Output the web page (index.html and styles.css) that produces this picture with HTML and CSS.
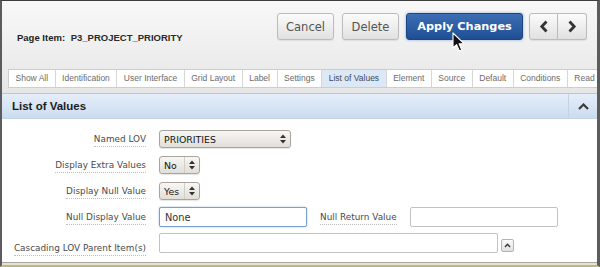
FILE: index.html
```html
<!DOCTYPE html>
<html lang="en">

<head>
    <meta charset="UTF-8">
    <meta name="viewport" content="width=device-width, initial-scale=1.0">
    <title>Page Item: P3_PROJECT_PRIORITY</title>
    <link rel="stylesheet" href="styles.css">
</head>

<body>

    <div class="screen">
        <div class="window">

            <div class="topbar">
                <div class="toolbar">
                    <div class="page-item"><strong>Page Item:</strong> <span>P3_PROJECT_PRIORITY</span></div>
                    <div class="actions">
                        <button class="btn btn-cancel">Cancel</button>
                        <button class="btn btn-delete">Delete</button>
                        <button class="btn btn-apply">Apply Changes</button>
                        <div class="nav-group">
                            <button class="btn btn-nav">
                                <svg width="10" height="13" viewBox="0 0 10 13"><polyline points="7.5,1.5 2.8,6.5 7.5,11.5" fill="none" stroke="#333" stroke-width="2.8"/></svg>
                            </button>
                            <button class="btn btn-nav">
                                <svg width="10" height="13" viewBox="0 0 10 13"><polyline points="2.5,1.5 7.2,6.5 2.5,11.5" fill="none" stroke="#333" stroke-width="2.8"/></svg>
                            </button>
                        </div>
                    </div>
                </div>

                <ul class="tabs">
                    <li>Show All</li>
                    <li>Identification</li>
                    <li>User Interface</li>
                    <li>Grid Layout</li>
                    <li>Label</li>
                    <li>Settings</li>
                    <li class="active">List of Values</li>
                    <li>Element</li>
                    <li>Source</li>
                    <li>Default</li>
                    <li>Conditions</li>
                    <li class="last">Read</li>
                </ul>
            </div>

            <div class="region-head">
                <h2>List of Values</h2>
                <div class="collapse">
                    <svg width="11" height="7" viewBox="0 0 11 7"><polyline points="1,6 5.5,1.5 10,6" fill="none" stroke="#3a3a3a" stroke-width="2.2"/></svg>
                </div>
            </div>

            <div class="region-body">
                <div class="row">
                    <div class="label"><span>Named LOV</span></div>
                    <div class="select select-wide">
                        <span class="select-text">PRIORITIES</span>
                        <span class="select-arrows">
                            <svg width="6" height="10" viewBox="0 0 6 10"><polygon points="0,4 3,0.5 6,4" fill="#333"/><polygon points="0,6 3,9.5 6,6" fill="#333"/></svg>
                        </span>
                    </div>
                </div>
                <div class="row">
                    <div class="label"><span>Display Extra Values</span></div>
                    <div class="select select-small">
                        <span class="select-text">No</span>
                        <span class="select-arrows split">
                            <svg width="6" height="10" viewBox="0 0 6 10"><polygon points="0,4 3,0.5 6,4" fill="#333"/><polygon points="0,6 3,9.5 6,6" fill="#333"/></svg>
                        </span>
                    </div>
                </div>
                <div class="row">
                    <div class="label"><span>Display Null Value</span></div>
                    <div class="select select-small">
                        <span class="select-text">Yes</span>
                        <span class="select-arrows split">
                            <svg width="6" height="10" viewBox="0 0 6 10"><polygon points="0,4 3,0.5 6,4" fill="#333"/><polygon points="0,6 3,9.5 6,6" fill="#333"/></svg>
                        </span>
                    </div>
                </div>
                <div class="row">
                    <div class="label"><span>Null Display Value</span></div>
                    <input class="field field-focus" type="text" value="None">
                    <div class="label label-inline"><span>Null Return Value</span></div>
                    <input class="field" type="text" value="">
                </div>
                <div class="row row-last">
                    <div class="label"><span>Cascading LOV Parent Item(s)</span></div>
                    <input class="field field-long" type="text" value="">
                    <button class="mini-btn">
                        <svg width="7" height="5" viewBox="0 0 7 5"><polyline points="1,4 3.5,1.3 6,4" fill="none" stroke="#333" stroke-width="1.4"/></svg>
                    </button>
                </div>
            </div>

        </div>

        <svg class="cursor" width="14" height="21" viewBox="0 0 14 21">
            <path d="M1 1 L1 16 L4.6 12.6 L7.4 19 L9.8 18 L7.1 11.7 L12 11.7 Z" fill="#111" stroke="#fff" stroke-width="1.1" stroke-linejoin="round"/>
        </svg>
    </div>

</body>

</html>
```

FILE: styles.css
```css
* {
    margin: 0;
    padding: 0;
    box-sizing: border-box;
}

body {
    width: 600px;
    height: 267px;
    overflow: hidden;
    background: #dcd6bd;
    font-family: "DejaVu Sans", sans-serif;
}

.screen {
    position: relative;
    width: 600px;
    height: 267px;
    border-top: 1px solid #3d3d3d;
    border-left: 2px solid #5c5c5c;
    border-right: 3px solid #5c5c5c;
    border-bottom: 2px solid #bfb486;
    background: #e8e3cc;
}

.window {
    height: 262px;
    background: #fff;
    border-bottom: 1px solid #a5a5a5;
    overflow: hidden;
    display: flex;
    flex-direction: column;
}

/* top toolbar */

.topbar {
    height: 92px;
    background: linear-gradient(#f8f8f8, #e6e6e6);
}

.toolbar {
    height: 65px;
    display: flex;
    align-items: flex-start;
    padding: 12px 10px 0 15px;
}

.page-item {
    flex: 1;
    margin-top: 19px;
    font-family: "Liberation Sans", Arial, sans-serif;
    font-size: 9.5px;
    line-height: 12px;
    color: #1e1e1e;
}

.page-item span {
    font-weight: bold;
    color: #2a2a2a;
    margin-left: 3px;
}

.actions {
    display: flex;
}

.btn {
    height: 27px;
    border: 1px solid #bcbcbc;
    border-radius: 3px;
    background: linear-gradient(#fbfbfb, #e1e1e1);
    font-family: "DejaVu Sans", sans-serif;
    font-size: 11.5px;
    color: #555;
    box-shadow: 0 1px 1px rgba(0, 0, 0, 0.08);
}

.btn-cancel {
    width: 57px;
}

.btn-delete {
    width: 57px;
    margin-left: 8px;
}

.btn-apply {
    width: 117px;
    margin-left: 7px;
    border-color: #1c4584;
    background: linear-gradient(#3d6fb5, #1f4e93);
    color: #fff;
    font-weight: bold;
    font-size: 11.3px;
    box-shadow: 0 0 3px rgba(60, 110, 190, 0.55);
}

.nav-group {
    display: flex;
    margin-left: 6px;
}

.btn-nav {
    width: 29px;
    display: flex;
    align-items: center;
    justify-content: center;
}

.btn-nav:first-child {
    border-radius: 3px 0 0 3px;
}

.btn-nav:last-child {
    border-left: none;
    border-radius: 0 3px 3px 0;
}

/* tabs */

.tabs {
    list-style: none;
    display: flex;
    margin: 3px 0 0 6px;
    height: 19px;
    background: #fff;
    border: 1px solid #cdcdcd;
    border-right: none;
    overflow: hidden;
    white-space: nowrap;
}

.tabs li {
    padding: 0 6.5px;
    border-right: 1px solid #d6d6d6;
    font-family: "Liberation Sans", Arial, sans-serif;
    font-size: 8.5px;
    line-height: 17px;
    color: #6c6c6c;
}

.tabs li.active {
    background: #dce8f5;
    color: #3b4b60;
}

.tabs li.last {
    flex: 1;
    border-right: none;
}

/* region */

.region-head {
    height: 26px;
    display: flex;
    align-items: center;
    border-top: 1px solid #b8c6d7;
    border-bottom: 1px solid #c4d4e6;
    background: linear-gradient(#e5eefa, #cbdcf0);
}

.region-head h2 {
    padding-left: 10px;
    font-family: "Liberation Sans", Arial, sans-serif;
    font-size: 11.5px;
    font-weight: bold;
    color: #1b1b1b;
}

.collapse {
    margin-left: auto;
    width: 29px;
    height: 100%;
    border-left: 1px solid #c3d2e4;
    display: flex;
    align-items: center;
    justify-content: center;
}

.region-body {
    flex: 1;
    padding-top: 10px;
    display: flex;
    flex-direction: column;
    gap: 6px;
}

.row {
    display: flex;
    align-items: center;
    height: 20px;
}

.label {
    width: 144px;
    margin-right: 13px;
    text-align: right;
    font-size: 8.9px;
    color: #4a4a4a;
    white-space: nowrap;
}

.label span {
    border-bottom: 1px dotted #bdbdbd;
    padding-bottom: 2px;
}

.label-inline {
    width: auto;
    margin: 0 13px;
}

/* selects */

.select {
    height: 18px;
    display: flex;
    align-items: center;
    border: 1px solid #a9a59d;
    border-radius: 3px;
    background: linear-gradient(#f8f7f4, #e2dfd8);
    box-shadow: 0 1px 1px rgba(0, 0, 0, 0.1);
}

.select-wide {
    width: 132px;
}

.select-small {
    width: 41px;
}

.select-text {
    padding-left: 4px;
    font-size: 9.4px;
    color: #151515;
}

.select-arrows {
    margin-left: auto;
    width: 14px;
    height: 100%;
    display: flex;
    align-items: center;
    justify-content: center;
}

.select-arrows.split {
    border-left: 1px solid #d2cec6;
    margin-right: 1px;
}

/* text fields */

.field {
    width: 148px;
    height: 20px;
    padding: 0 5px;
    border: 1px solid #c2c2c2;
    border-radius: 2px;
    background: #fff;
    font-family: "DejaVu Sans", sans-serif;
    font-size: 9.8px;
    color: #333;
    outline: none;
}

.field-focus {
    border-color: #7b9ecb;
    box-shadow: 0 0 2px rgba(90, 140, 210, 0.6);
}

.field-long {
    width: 339px;
}

.row-last {
    align-items: flex-end;
}

.mini-btn {
    width: 13px;
    height: 13px;
    margin: 0 0 1px 3px;
    border: 1px solid #b3b3b3;
    border-radius: 2px;
    background: linear-gradient(#fafafa, #e0e0e0);
    display: flex;
    align-items: center;
    justify-content: center;
}

.cursor {
    position: absolute;
    left: 450px;
    top: 31px;
}
```
